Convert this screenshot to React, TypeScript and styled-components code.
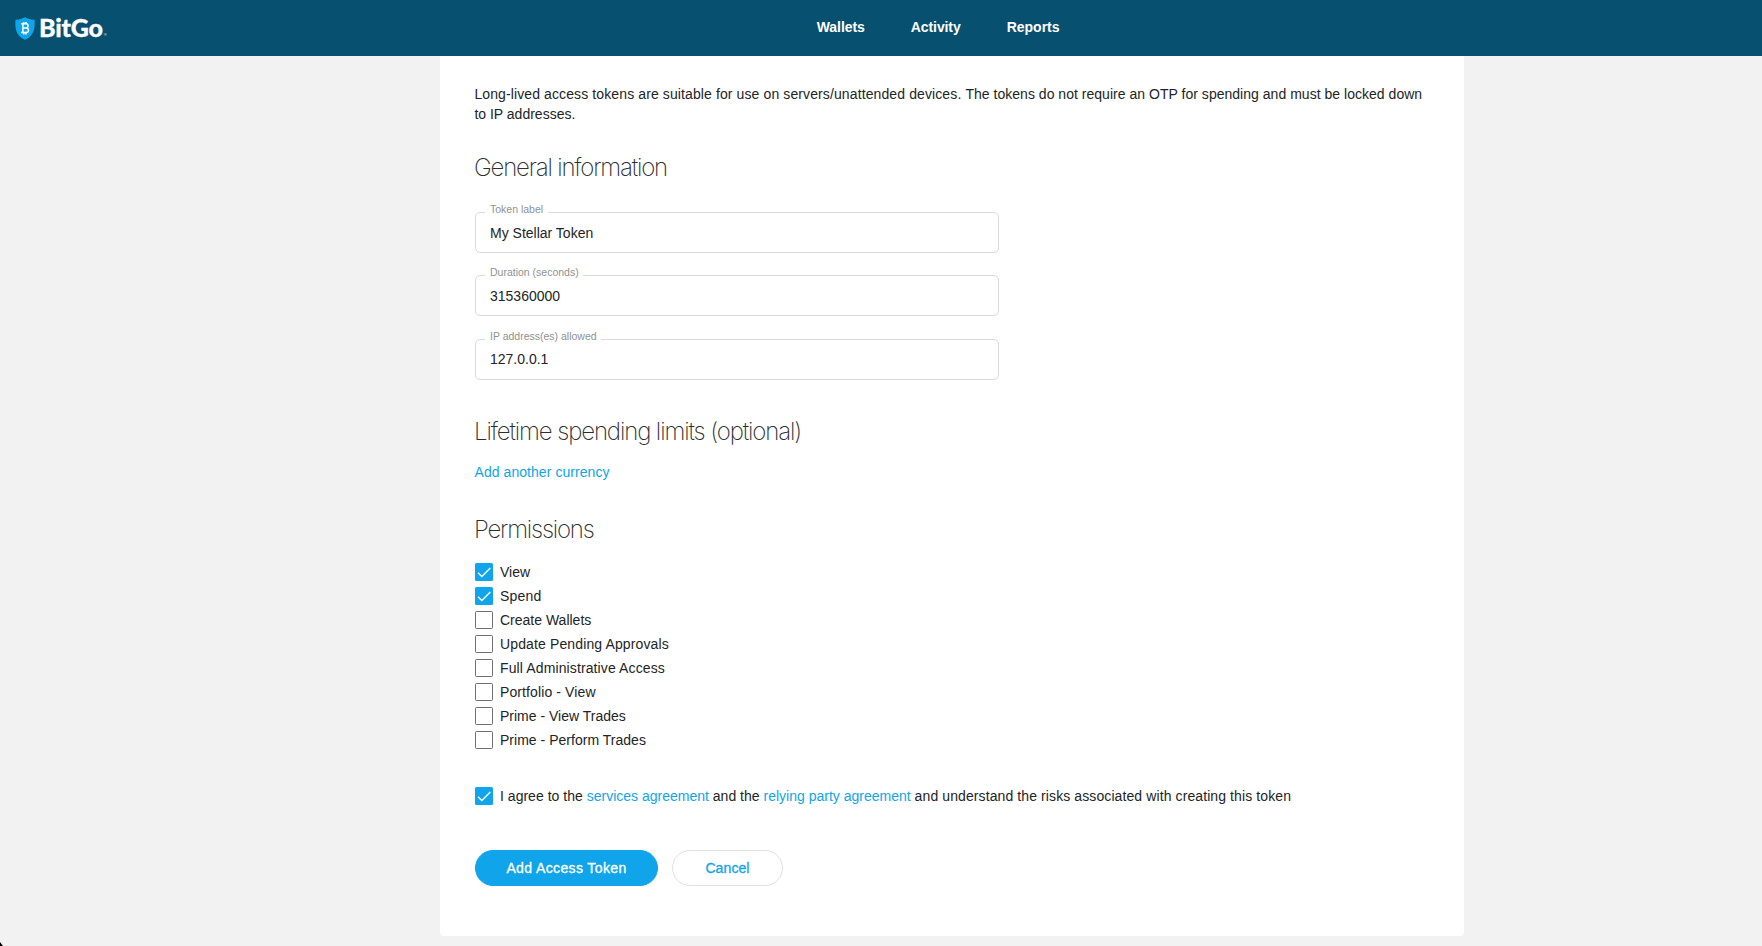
import React, { useState } from "react";
import styled, { createGlobalStyle } from "styled-components";

const sans = `"Liberation Sans", Arial, sans-serif`;

const GlobalStyle = createGlobalStyle`
  * { box-sizing: border-box; }
  body {
    margin: 0;
    background: #f2f2f2;
    color: #222425;
    font: 14px/20px ${sans};
    height: 946px;
    overflow: hidden;
  }
  h2, p { margin: 0; }
`;

const Page = styled.div`
  display: flex;
  flex-direction: column;
  height: 946px;
`;

const Header = styled.header`
  display: grid;
  grid-template-columns: 816.7px 1fr;
  align-items: center;
  height: 56px;
  flex: none;
  background: #07506f;
`;

const Brand = styled.a`
  display: flex;
  align-items: center;
  height: 56px;
  padding-left: 15px;
  color: #fff;
`;

const Shield = styled.svg`
  width: 20px;
  height: 23px;
  flex: none;
`;

const BrandName = styled.span`
  margin-left: 4px;
  padding-bottom: 3px;
  font: 900 25px/32px Lato, sans-serif;
  letter-spacing: -0.2px;
  -webkit-text-stroke: 0.3px #fff;
`;

const Registered = styled.span`
  align-self: flex-end;
  margin: 0 0 18px 1px;
  font-size: 4px;
  line-height: 6px;
`;

const Nav = styled.nav`
  display: flex;
  gap: 46px;
  padding-bottom: 2px;
`;

const NavLink = styled.a<{ $track: number }>`
  color: #fff;
  font-weight: 700;
  letter-spacing: ${(p) => p.$track}px;
`;

const Card = styled.main`
  width: 1024px;
  height: 880px;
  margin-left: 440px;
  padding: 28px 35px 0;
  background: #fff;
  border-radius: 0 0 4px 4px;
`;

const Intro = styled.p`
  margin-left: -0.6px;
  white-space: nowrap;
`;

const Line = styled.span`
  display: flex;
  white-space: pre;
`;

const Heading = styled.h2<{ $top: number; $track: number }>`
  margin: ${(p) => p.$top}px 0 -1px -1px;
  color: #2c2e2f;
  font: 200 24px/31px Inter, sans-serif;
  letter-spacing: ${(p) => p.$track}px;
  white-space: nowrap;
`;

const Fields = styled.div`
  display: flex;
  flex-direction: column;
  width: 524px;
  margin-top: 30px;
`;

const Field = styled.label<{ $gap: number }>`
  position: relative;
  display: block;
  height: 41px;
  margin-bottom: ${(p) => p.$gap}px;
`;

const FieldName = styled.span<{ $width: number }>`
  position: absolute;
  top: -10px;
  left: 10px;
  width: ${(p) => p.$width}px;
  padding-left: 5px;
  background: #fff;
  color: #8f9192;
  font-size: 10.5px;
  line-height: 14px;
  white-space: nowrap;
`;

const Input = styled.input<{ $lift: number }>`
  display: block;
  width: 100%;
  height: 41px;
  padding: 0 14px ${(p) => p.$lift}px;
  border: 1px solid #d9dadb;
  border-radius: 5px;
  outline: none;
  background: #fff;
  color: #222425;
  font: 14px/20px ${sans};
`;

const Link = styled.a<{ $track?: number }>`
  color: #10a5ea;
  letter-spacing: ${(p) => p.$track ?? 0}px;
`;

const Tracked = styled.span<{ $track: number }>`
  letter-spacing: ${(p) => p.$track}px;
`;

const LinkRow = styled.div`
  margin: 16px 0 0 -0.5px;
`;

const Permissions = styled.div`
  display: flex;
  flex-direction: column;
  gap: 4px;
  margin-top: 18px;
`;

const CheckRow = styled.label<{ $track: number }>`
  display: flex;
  align-items: center;
  gap: 7px;
  height: 20px;
  letter-spacing: ${(p) => p.$track}px;
  white-space: pre;
`;

const Box = styled.span<{ $on: boolean }>`
  display: flex;
  flex: none;
  width: 18px;
  height: 18px;
  border: ${(p) => (p.$on ? "none" : "1px solid #6c6e70")};
  border-radius: 1.5px;
  background: ${(p) => (p.$on ? "#10a5ea" : "#fff")};
`;

const HiddenInput = styled.input`
  display: none;
`;

const Agreement = styled.div`
  margin-top: 36px;
`;

const Actions = styled.div`
  display: flex;
  gap: 14px;
  margin-top: 44px;
`;

const Button = styled.button<{ $primary?: boolean; $width: number; $track: number }>`
  width: ${(p) => p.$width}px;
  height: 36px;
  padding: 0;
  border: 1px solid ${(p) => (p.$primary ? "#10a5ea" : "#dfe0e1")};
  border-radius: 18px;
  background: ${(p) => (p.$primary ? "#10a5ea" : "#fff")};
  color: ${(p) => (p.$primary ? "#fff" : "#10a5ea")};
  font: 14px/20px ${sans};
  letter-spacing: ${(p) => p.$track}px;
  -webkit-text-stroke: 0.3px currentColor;
`;

const WindowCorner = styled.div`
  position: fixed;
  left: 0;
  bottom: 0;
  width: 3px;
  height: 4px;
  background: #000;
  clip-path: polygon(0 0, 100% 100%, 0 100%);
`;

function Check({ on, onToggle, track, children }: {
  on: boolean;
  onToggle: () => void;
  track: number;
  children: React.ReactNode;
}) {
  return (
    <CheckRow $track={track}>
      <HiddenInput type="checkbox" checked={on} onChange={onToggle} />
      <Box $on={on}>
        {on && (
          <svg width="18" height="18" viewBox="0 0 18 18" fill="none">
            <path d="M3 9.8l3.8 3.7L15.3 5" stroke="#fff" strokeWidth="1.4" />
          </svg>
        )}
      </Box>
      <span>{children}</span>
    </CheckRow>
  );
}

const navItems = [
  { text: "Wallets", track: -0.05 },
  { text: "Activity", track: -0.1 },
  { text: "Reports", track: 0 },
];

const fields = [
  { name: "Token label", value: "My Stellar Token", width: 63, gap: 22, lift: 0 },
  { name: "Duration (seconds)", value: "315360000", width: 98, gap: 23, lift: 0 },
  { name: "IP address(es) allowed", value: "127.0.0.1", width: 116, gap: 0, lift: 2 },
];

const permissions = [
  { text: "View", track: 0 },
  { text: "Spend", track: 0.2 },
  { text: "Create Wallets", track: 0 },
  { text: "Update Pending Approvals", track: 0.13 },
  { text: "Full Administrative Access", track: 0.12 },
  { text: "Portfolio - View", track: 0.11 },
  { text: "Prime - View Trades", track: 0 },
  { text: "Prime - Perform Trades", track: 0.02 },
];

export default function App() {
  const [granted, setGranted] = useState<string[]>(["View", "Spend"]);
  const [agreed, setAgreed] = useState(true);
  const toggle = (name: string) =>
    setGranted((g) => (g.includes(name) ? g.filter((n) => n !== name) : [...g, name]));

  return (
    <Page>
      <GlobalStyle />
      <Header>
        <Brand>
          <Shield viewBox="0 0 20 23">
            <path d="M10 0.3C7 2.2 3.8 2.8 0.5 2.7C-0.3 12 1.5 19.3 10 22.7C18.5 19.3 20.3 12 19.5 2.7C16.2 2.8 13 2.2 10 0.3Z" fill="#10a5ea" />
            <path d="M6.2 6.8H11.1Q13 6.8 13 8.8Q13 10.9 11.1 10.9Q13.5 11 13.5 13.3Q13.5 15.6 11.1 15.6H6.2M7.9 6.8V15.6M7.9 11H11.2M8.8 5V6.8M11 5V6.8M8.8 15.6V17.4M11 15.6V17.4" fill="none" stroke="#fff" strokeWidth="1.5" />
          </Shield>
          <BrandName>BitGo</BrandName>
          <Registered>®</Registered>
        </Brand>
        <Nav>
          {navItems.map((n) => (
            <NavLink key={n.text} $track={n.track}>{n.text}</NavLink>
          ))}
        </Nav>
      </Header>

      <Card>
        <Intro>
          <Line>
            <Tracked $track={0.11}>
              {"Long-lived access tokens are suitable for use on servers/unattended devices. "}
            </Tracked>
            <Tracked $track={0.025}>
              The tokens do not require an OTP for spending and must be locked down
            </Tracked>
          </Line>
          <Line>to IP addresses.</Line>
        </Intro>

        <Heading $top={28} $track={-1.19}>General information</Heading>
        <Fields>
          {fields.map((f) => (
            <Field key={f.name} $gap={f.gap}>
              <Input defaultValue={f.value} $lift={f.lift} />
              <FieldName $width={f.width}>{f.name}</FieldName>
            </Field>
          ))}
        </Fields>

        <Heading $top={36} $track={-1.12}>Lifetime spending limits (optional)</Heading>
        <LinkRow>
          <Link $track={0.06}>Add another currency</Link>
        </LinkRow>

        <Heading $top={32} $track={-1.22}>Permissions</Heading>
        <Permissions>
          {permissions.map((p) => (
            <Check key={p.text} track={p.track} on={granted.includes(p.text)} onToggle={() => toggle(p.text)}>
              {p.text}
            </Check>
          ))}
        </Permissions>

        <Agreement>
          <Check track={0.02} on={agreed} onToggle={() => setAgreed(!agreed)}>
            I agree to the <Link>services agreement</Link> and the <Link>relying party agreement</Link>
            <Tracked $track={0.1}> and understand the risks associated with creating this token</Tracked>
          </Check>
        </Agreement>

        <Actions>
          <Button $primary $width={183} $track={0.38}>Add Access Token</Button>
          <Button $width={111} $track={0.1}>Cancel</Button>
        </Actions>
      </Card>
      <WindowCorner />
    </Page>
  );
}
